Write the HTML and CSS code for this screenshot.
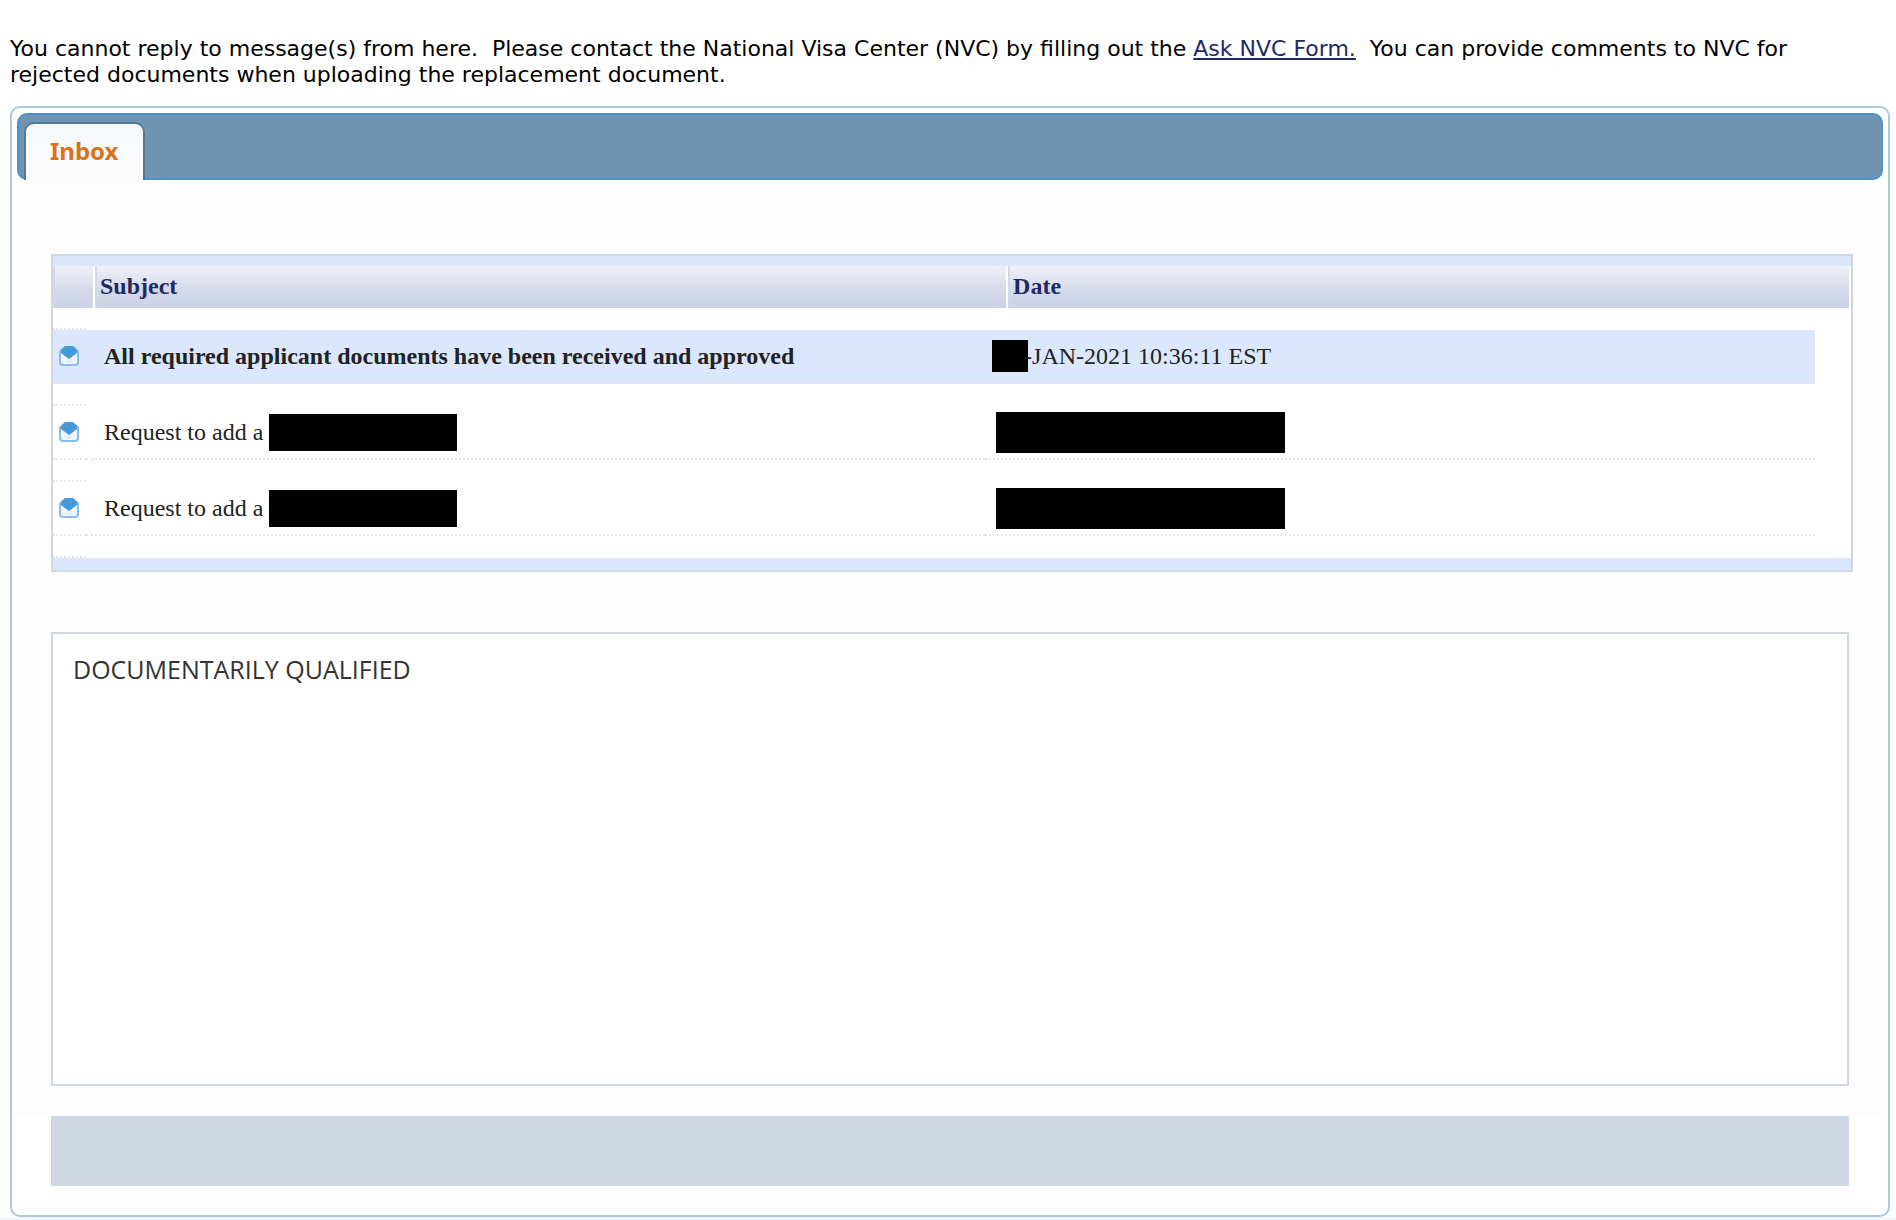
FILE: index.html
```html
<!DOCTYPE html>
<html lang="en">
<head>
    <meta charset="UTF-8">
    <meta name="viewport" content="width=device-width, initial-scale=1.0">
    <title>Inbox</title>

    <link rel="stylesheet" href="styles.css">
</head>
<body>
    <!-- envelope shared by all message rows -->
    <svg class="sprite" width="0" height="0" aria-hidden="true">
        <symbol id="envelope" viewBox="0 0 22 22">
            <path d="M7 1h8l6 5v11a4 4 0 0 1-4 4H5a4 4 0 0 1-4-4V6z" fill="#86bdeb"/>
            <path d="M3 7h16v10a2 2 0 0 1-2 2H5a2 2 0 0 1-2-2z" fill="#f0f6fd"/>
            <path d="M7 1h8l4 4v3l-8 6-8-6V5z" fill="#4699d9"/>
            <path d="M8 16q3 2 6 0" fill="none" stroke="#d3e2f3"/>
        </symbol>
    </svg>

    <p class="notice">You cannot reply to message(s) from here.&nbsp; Please contact the National Visa Center (NVC) by filling out the <a href="#">Ask NVC Form.</a>&nbsp; You can provide comments to NVC for rejected documents when uploading the replacement document.</p>

    <div class="panel">
        <nav class="tabs">
            <a class="tab" href="#inbox">Inbox</a>
        </nav>

        <div class="content" id="inbox">
            <div class="grid">
                <table class="messages">
                    <thead>
                        <tr>
                            <th aria-label="Status"></th>
                            <th>Subject</th>
                            <th>Date</th>
                        </tr>
                    </thead>
                    <tbody>
                        <tr class="gap"><td></td></tr>
                        <tr class="row selected">
                            <td class="icon"><svg><use href="#envelope"/></svg></td>
                            <td class="subject">All required applicant documents have been received and approved</td>
                            <td class="date"><span class="redacted day"></span>-JAN-2021 10:36:11 EST</td>
                        </tr>
                        <tr class="gap"><td></td></tr>
                        <tr class="row">
                            <td class="icon"><svg><use href="#envelope"/></svg></td>
                            <td class="subject">Request to add a <span class="redacted name"></span></td>
                            <td class="date"><span class="redacted full-date"></span></td>
                        </tr>
                        <tr class="gap"><td></td></tr>
                        <tr class="row">
                            <td class="icon"><svg><use href="#envelope"/></svg></td>
                            <td class="subject">Request to add a <span class="redacted name"></span></td>
                            <td class="date"><span class="redacted full-date"></span></td>
                        </tr>
                        <tr class="gap"><td></td></tr>
                    </tbody>
                </table>
            </div>

            <div class="message">DOCUMENTARILY QUALIFIED</div>
        </div>

        <div class="toolbar"></div>
    </div>
</body>
</html>
```
FILE: styles.css
```css
body {
    font-family: "Liberation Serif", "Times New Roman", serif;
    font-size: 24px;
    background-color: #fff;
    color: #222;
    margin: 0;
    padding: 36px 6px 0 10px;
    border-bottom: 3px solid #f1f6fb;
}

.sprite {
    position: absolute;
}

.notice {
    font-family: Verdana, "DejaVu Sans", sans-serif;
    font-size: 22px;
    line-height: 26px;
    color: #000;
    margin: 0 0 18px;
    padding-right: 60px;
}

.notice a {
    color: #1f2a63;
}

.panel {
    border: 2px solid #a9c9e1;
    border-radius: 10px;
}

/* Tab bar */
.tabs {
    display: flex;
    margin: 5px 5px 0;
    padding: 7px 5px 0;
    background-color: #7194b0;
    border: 2px solid #4b91cb;
    border-radius: 10px;
}

.tab {
    font-family: "Noto Sans", sans-serif;
    font-size: 24px;
    font-weight: bold;
    line-height: 32px;
    color: #d9731a;
    text-decoration: none;
    padding: 11px 24px 13px;
    margin-bottom: -2px;
    background: linear-gradient(#f5f7fb, #fdfdfd);
    border: 2px solid #54789a;
    border-bottom: none;
    border-radius: 10px 10px 0 0;
}

.content {
    background-color: #fdfdfd;
    padding: 74px 35px 30px 39px;
}

/* Message list */
.grid {
    background-color: #fff;
    border: 2px solid #d0d7e1;
}

.grid::before,
.grid::after {
    content: "";
    display: block;
    height: 10px;
    background-color: #dbe7fd;
}

.grid::after {
    height: 12px;
}

.messages,
.messages thead,
.messages tbody {
    display: block;
}

.messages tr {
    display: grid;
}

.messages td {
    padding: 0;
}

.messages thead tr {
    grid-template-columns: 42px 52fr 48fr;
}

.messages th {
    box-sizing: border-box;
    height: 42px;
    padding: 0 3px;
    line-height: 40px;
    text-align: left;
    color: #1f2a63;
    background: linear-gradient(#eff1f8, #d4d9ea 60%, #ccd3e8);
    border-left: 2px solid #d3d9e4;
    border-right: 2px solid #fff;
}

.messages .gap {
    grid-template-columns: 33px;
}

.gap td {
    height: 20px;
    border-bottom: 2px dotted #e6e6e6;
}

.messages .row {
    grid-template-columns: 33px 52fr 48fr;
    margin-right: 36px;
}

.row td {
    display: flex;
    align-items: center;
    height: 52px;
    white-space: pre;
    border-bottom: 2px dotted #e6e6e6;
}

.selected {
    background-color: #dbe7fd;
}

.selected .subject {
    font-weight: bold;
}

.row .icon {
    padding-left: 5px;
}

.icon svg {
    width: 22px;
    height: 22px;
}

.row .subject {
    padding-left: 18px;
}

.row .date {
    padding-left: 11px;
}

.redacted {
    background-color: #000;
}

.day {
    width: 36px;
    height: 32px;
    margin: 0 -4px;
}

.name {
    width: 188px;
    height: 37px;
}

.full-date {
    width: 289px;
    height: 41px;
}

/* Opened message */
.message {
    min-height: 414px;
    margin: 60px 4px 0 0;
    padding: 18px 20px;
    font-family: "Lucida Grande", "Open Sans", sans-serif;
    font-size: 25px;
    line-height: 34px;
    color: #333;
    background-color: #fff;
    border: 2px solid #d0d7e1;
}

.toolbar {
    height: 70px;
    margin: 0 39px 29px;
    background-color: #d0d7e4;
}
```
